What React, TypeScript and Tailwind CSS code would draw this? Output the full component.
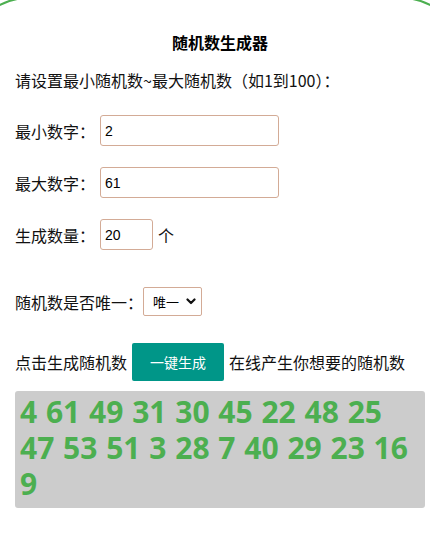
import { useState } from 'react';

const CJK = "font-['Noto_Sans_CJK_SC',sans-serif]";

export default function App() {
  const [min, setMin] = useState('2');
  const [max, setMax] = useState('61');
  const [count, setCount] = useState('20');
  const [unique, setUnique] = useState('1');
  const [nums] = useState([4, 61, 49, 31, 30, 45, 22, 48, 25, 47, 53, 51, 3, 28, 7, 40, 29, 23, 16, 9]);

  return (
    <div className={`w-[430px] h-[535px] overflow-hidden bg-white text-[#111] ${CJK}`}>
      {/* outer rounded frame, wider than the window */}
      <div className="-ml-[35px] -mt-[3px] w-[500px] h-[551px] border-2 border-[#4caf50] rounded-[64px]">
        <div className="pl-[48px] pr-[38px] pt-[31px]">
          <h1 className="h-6 leading-6 text-center text-[16px] font-bold text-black">随机数生成器</h1>

          <p className="mt-[14px] h-6 leading-6 text-[16px]">请设置最小随机数~最大随机数（如1到100）：</p>

          <div className="mt-[23px] flex items-center h-[31px]">
            <span className="w-[85px] text-[16px] leading-6">最小数字：</span>
            <input
              value={min}
              onChange={(e) => setMin(e.target.value)}
              className="w-[179px] h-[31px] px-[4px] border border-[#d3ab96] rounded-[3px] text-[14px] font-['Liberation_Sans',sans-serif] text-black outline-none"
            />
          </div>

          <div className="mt-[21px] flex items-center h-[31px]">
            <span className="w-[85px] text-[16px] leading-6">最大数字：</span>
            <input
              value={max}
              onChange={(e) => setMax(e.target.value)}
              className="w-[179px] h-[31px] px-[4px] border border-[#d3ab96] rounded-[3px] text-[14px] font-['Liberation_Sans',sans-serif] text-black outline-none"
            />
          </div>

          <div className="mt-[21px] flex items-center h-[31px]">
            <span className="w-[85px] text-[16px] leading-6">生成数量：</span>
            <input
              value={count}
              onChange={(e) => setCount(e.target.value)}
              className="w-[53px] h-[31px] px-[4px] border border-[#d3ab96] rounded-[3px] text-[14px] font-['Liberation_Sans',sans-serif] text-black outline-none"
            />
            <span className="ml-[5px] text-[16px] leading-6">个</span>
          </div>

          <div className="mt-[37px] flex items-center h-[29px]">
            <span className="w-[128px] text-[16px] leading-6">随机数是否唯一：</span>
            <div className="relative">
              <select
                value={unique}
                onChange={(e) => setUnique(e.target.value)}
                className="appearance-none w-[59px] h-[29px] pl-[9px] border border-[#d3ab96] rounded-[2px] bg-white text-[13px] text-black outline-none"
              >
                <option value="1">唯一</option>
                <option value="0">不唯一</option>
              </select>
              <svg className="absolute right-[6px] top-[11px] pointer-events-none" width="10" height="7" viewBox="0 0 10 7">
                <path d="M1.5 1.5 L5 5 L8.5 1.5" fill="none" stroke="#111" strokeWidth="2.2" strokeLinecap="round" strokeLinejoin="round" />
              </svg>
            </div>
          </div>

          <div className="mt-[27px] flex items-center h-[38px] gap-[5px] text-[16px]">
            <span className="leading-6">点击生成随机数</span>
            <button className="w-[92px] h-[38px] bg-[#009688] text-white text-[14px] rounded-[2px]">一键生成</button>
            <span className="leading-6">在线产生你想要的随机数</span>
          </div>

          <div className="mt-[10px] w-[410px] h-[117px] bg-[#cccccc] rounded-[3px] pl-[5px] pr-[8px] py-[3px]">
            <p className="text-[30px] leading-[36px] font-bold text-[#4caf50] font-['Open_Sans',sans-serif] [word-spacing:1px]">
              {nums.join(' ')}
            </p>
          </div>
        </div>
      </div>
    </div>
  );
}
